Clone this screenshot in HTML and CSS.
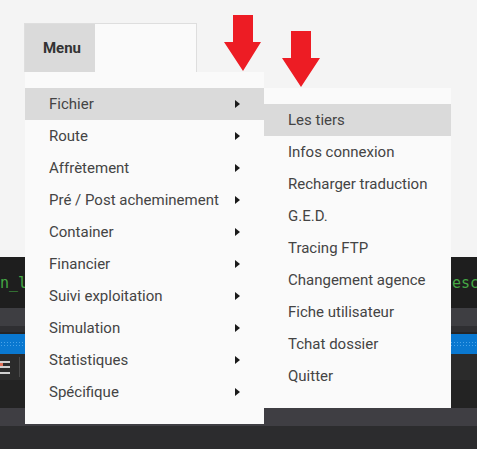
FILE: index.html
```html
<!DOCTYPE html>
<html lang="fr">
<head>
<meta charset="utf-8">
<title>Menu</title>
<link rel="stylesheet" href="styles.css">
</head>
<body>
<div class="page">
  <div class="top">
    <div class="menubar">
      <div class="menu-tab">Menu</div>
      <ul class="dropdown">
        <li class="item active">Fichier<span class="caret"></span>
          <ul class="submenu">
            <li class="item active">Les tiers</li>
            <li class="item">Infos connexion</li>
            <li class="item">Recharger traduction</li>
            <li class="item">G.E.D.</li>
            <li class="item">Tracing FTP</li>
            <li class="item">Changement agence</li>
            <li class="item">Fiche utilisateur</li>
            <li class="item">Tchat dossier</li>
            <li class="item">Quitter</li>
          </ul>
        </li>
        <li class="item">Route<span class="caret"></span></li>
        <li class="item">Affrètement<span class="caret"></span></li>
        <li class="item">Pré / Post acheminement<span class="caret"></span></li>
        <li class="item">Container<span class="caret"></span></li>
        <li class="item">Financier<span class="caret"></span></li>
        <li class="item">Suivi exploitation<span class="caret"></span></li>
        <li class="item">Simulation<span class="caret"></span></li>
        <li class="item">Statistiques<span class="caret"></span></li>
        <li class="item">Spécifique<span class="caret"></span></li>
      </ul>
    </div>
  </div>
  <div class="editor">
    <div class="code-row"><span class="code-a">n_libelle</span><span class="code-b">escription</span></div>
    <div class="tabs-row"></div>
    <div class="sep-row"></div>
    <div class="line-row"></div>
    <div class="progress-row"><span class="dots"></span></div>
    <div class="tool-row">
      <span class="list-icon"><i class="x"></i><i class="l"></i><i class="l"></i><i class="l"></i></span>
      <span class="divider"></span>
    </div>
    <div class="panel-row"></div>
    <div class="status-row"></div>
    <div class="bottom-row"></div>
  </div>
  <svg class="arrows" width="477" height="449" viewBox="0 0 477 449">
    <polygon points="233,15 253,15 253,42 261,42 243,71 224,42 233,42" fill="#ed1c24"/>
    <polygon points="291,31 311,31 311,58 320,58 301,87 282,58 291,58" fill="#ed1c24"/>
  </svg>
</div>
</body>
</html>
```

FILE: styles.css
```css
html, body {
  margin: 0;
  padding: 0;
}
body {
  background: #f4f4f4;
  font-family: Roboto, "Liberation Sans", sans-serif;
  overflow: hidden;
}
.page {
  position: relative;
  width: 477px;
  height: 449px;
  overflow: hidden;
}
.top {
  height: 257px;
  padding: 23px 0 0 24px;
  box-sizing: border-box;
}
.menubar {
  position: relative;
  width: 171px;
  height: 48px;
  border: 1px solid #dedede;
  border-bottom: none;
  background: #fafafa;
  z-index: 2;
}
.menu-tab {
  width: 70px;
  height: 48px;
  background: #dadada;
  font-weight: bold;
  font-size: 15px;
  color: #333;
  display: flex;
  align-items: center;
  justify-content: center;
  padding-left: 4px;
  box-sizing: border-box;
}
.dropdown, .submenu {
  list-style: none;
  margin: 0;
  padding: 16px 0;
  background: #fafafa;
  position: absolute;
}
.dropdown {
  top: 100%;
  left: 0;
  width: 239px;
}
.submenu {
  top: 0;
  left: 100%;
  width: 187px;
}
.item {
  position: relative;
  height: 32px;
  line-height: 32px;
  font-size: 15px;
  color: #444;
  padding: 0 24px;
  display: flex;
  align-items: center;
  justify-content: space-between;
  white-space: nowrap;
}
.item.active {
  background: #dadada;
}
.caret {
  width: 0;
  height: 0;
  border-left: 5px solid #1a1a1a;
  border-top: 4px solid transparent;
  border-bottom: 4px solid transparent;
}
.editor {
  display: flex;
  flex-direction: column;
  height: 192px;
}
.code-row {
  height: 51px;
  background: #1e1e1e;
  display: flex;
  align-items: center;
  font-family: "DejaVu Sans Mono", "Liberation Mono", monospace;
  font-size: 15px;
  color: #45a845;
  white-space: nowrap;
  overflow: hidden;
}
.code-a {
  width: 452px;
  flex: none;
  overflow: hidden;
}
.code-b {
  flex: none;
}
.tabs-row {
  height: 18px;
  background: #3e3e42;
}
.sep-row {
  height: 6px;
  background: #2f2f32;
}
.line-row {
  height: 2px;
  background: #252526;
}
.progress-row {
  height: 20px;
  background: #0a78d0;
  display: flex;
  align-items: center;
}
.dots {
  display: block;
  width: 100%;
  height: 6px;
  background-image: radial-gradient(circle, #4aa3e8 0.8px, transparent 1px);
  background-size: 3px 3px;
}
.tool-row {
  height: 26px;
  background: #2b2b2b;
  display: flex;
  align-items: center;
  gap: 9px;
}
.list-icon {
  width: 10px;
  height: 13px;
  display: flex;
  flex-direction: column;
  justify-content: space-between;
  align-items: flex-end;
  position: relative;
}
.list-icon .l {
  display: block;
  width: 10px;
  height: 2px;
  background: #d0d0d0;
}
.list-icon .x {
  position: absolute;
  left: 0;
  top: 2px;
  width: 3px;
  height: 3px;
  background: #e0705a;
}
.divider {
  width: 1px;
  height: 20px;
  background: #4a4a4a;
}
.panel-row {
  height: 28px;
  background: #232323;
}
.status-row {
  height: 18px;
  background: #3f3e43;
}
.bottom-row {
  flex: 1;
  background: #2c2c2e;
}
.arrows {
  position: absolute;
  left: 0;
  top: 0;
  pointer-events: none;
  z-index: 3;
}
```
